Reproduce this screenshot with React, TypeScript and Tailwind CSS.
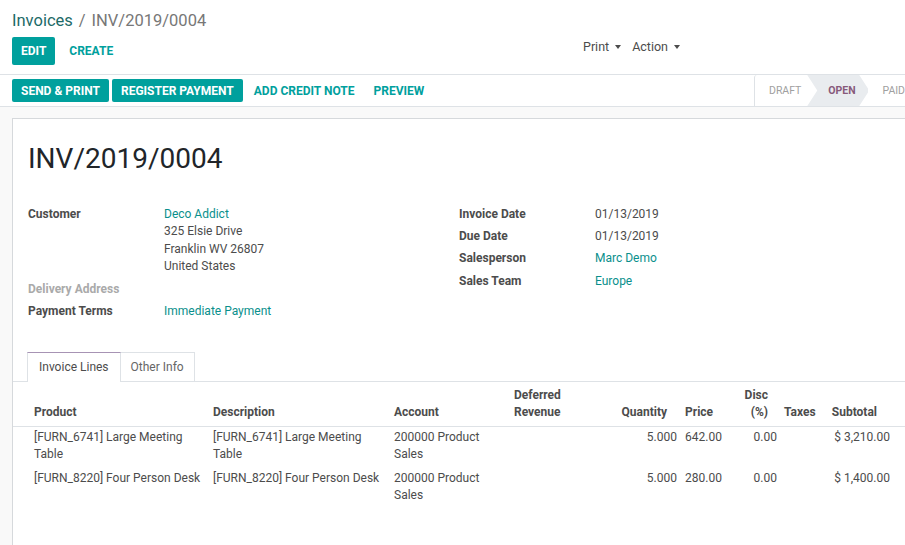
const Caret = () => (
  <span className="ml-[6px] inline-block h-0 w-0 border-x-[3.5px] border-t-[4px] border-x-transparent border-t-[#4c4c4c] align-middle" />
);

const Field = ({ label, children, muted }: { label: string; children?: React.ReactNode; muted?: boolean }) => (
  <div className="flex py-[2px] leading-[18px]">
    <div className={`w-[136px] shrink-0 font-bold ${muted ? "text-[#aaaaaa]" : "text-[#4c4c4c]"}`}>{label}</div>
    <div className="text-[#4c4c4c]">{children}</div>
  </div>
);

const cols = "grid grid-cols-[194px_181px_120px_102px_73px_57px_43px_43px_70px]";

const lines = [
  {
    product: ["[FURN_6741] Large Meeting", "Table"],
    desc: ["[FURN_6741] Large Meeting", "Table"],
    qty: "5.000",
    price: "642.00",
    subtotal: "$ 3,210.00",
  },
  {
    product: ["[FURN_8220] Four Person Desk"],
    desc: ["[FURN_8220] Four Person Desk"],
    qty: "5.000",
    price: "280.00",
    subtotal: "$ 1,400.00",
  },
];

export default function App() {
  return (
    <div className="h-[545px] w-[905px] overflow-hidden bg-white text-[12px] text-[#4c4c4c] [font-family:Roboto,'Noto_Sans',sans-serif]">
      {/* control panel */}
      <div className="h-[75px] border-b border-[#dee2e6] px-3">
        <div className="h-[37px] pt-[9px] text-[16.5px] leading-[24px]">
          <span className="text-[#1d6a67]">Invoices</span>
          <span className="px-[6px] text-[#777777]">/</span>
          <span className="text-[#777777]">INV/2019/0004</span>
        </div>
        <div className="flex h-[28px] items-center">
          <div className="flex w-[571px] items-center">
            <button className="h-[28px] rounded-[2px] bg-[#00A09D] px-[9px] text-[12px] font-bold text-white">EDIT</button>
            <button className="ml-[4px] h-[28px] px-[10px] text-[12px] font-bold text-[#00A09D]">CREATE</button>
          </div>
          <div className="flex items-center self-start pt-[1px] text-[12.5px] leading-[18px] text-[#4c4c4c]">
            <span>Print</span>
            <Caret />
            <span className="ml-[11px]">Action</span>
            <Caret />
          </div>
        </div>
      </div>

      {/* status bar */}
      <div className="flex h-[32px] items-center border-b border-[#dee2e6] pl-3">
        <div className="flex items-center gap-[3px]">
          <button className="h-[23px] rounded-[2px] bg-[#00A09D] px-[9px] text-[12px] font-bold text-white">SEND &amp; PRINT</button>
          <button className="h-[23px] rounded-[2px] bg-[#00A09D] px-[9px] text-[12px] font-bold text-white">REGISTER PAYMENT</button>
          <button className="h-[23px] px-[8px] text-[12px] font-bold text-[#00A09D]">ADD CREDIT NOTE</button>
          <button className="h-[23px] px-[8px] text-[12px] font-bold text-[#00A09D]">PREVIEW</button>
        </div>
        <div className="ml-auto flex h-full w-[151px] items-stretch rounded-tl-[3px] border-l border-[#dee2e6] text-[10.5px]">
          <div className="flex w-[53px] items-center pl-[14px] text-[#a0a0a0]">DRAFT</div>
          <div className="flex w-[62px] items-center bg-[#e9ecef] pl-[21px] font-bold text-[#875A7B] [clip-path:polygon(0_0,52px_0,62px_50%,52px_100%,0_100%,10px_50%)]">
            OPEN
          </div>
          <div className="flex items-center pl-[14px] text-[#a0a0a0]">PAID</div>
        </div>
      </div>

      {/* form */}
      <div className="h-full bg-[#f9f9f9] pl-3 pt-[11px]">
        <div className="min-h-[500px] w-[905px] border border-[#d6d9dc] bg-white pl-[15px] pt-[23px]">
          <h1 className="text-[28px] leading-[34px] text-[#212529]">INV/2019/0004</h1>

          <div className="mt-[27px] flex">
            <div className="w-[431px]">
              <Field label="Customer">
                <div className="text-[#0a8f8c]">Deco Addict</div>
                <div className="leading-[17.5px]">325 Elsie Drive</div>
                <div className="leading-[17.5px]">Franklin WV 26807</div>
                <div className="leading-[17.5px]">United States</div>
              </Field>
              <Field label="Delivery Address" muted />
              <Field label="Payment Terms">
                <span className="text-[#0a8f8c]">Immediate Payment</span>
              </Field>
            </div>
            <div>
              <Field label="Invoice Date">01/13/2019</Field>
              <Field label="Due Date">01/13/2019</Field>
              <Field label="Salesperson">
                <span className="text-[#0a8f8c]">Marc Demo</span>
              </Field>
              <div className="pt-[1px]">
                <Field label="Sales Team">
                  <span className="text-[#0a8f8c]">Europe</span>
                </Field>
              </div>
            </div>
          </div>

          {/* notebook */}
          <div className="-ml-[15px] mt-[30.5px]">
            <div className="flex border-b border-[#dee2e6] pl-[14px]">
              <div className="-mb-px border-x border-t border-x-[#dee2e6] border-t-[#a793b4] bg-white px-[11px] py-[5px] leading-[18px] text-[#4c4c4c]">
                Invoice Lines
              </div>
              <div className="border-r border-t border-[#dee2e6] px-[10px] py-[5px] leading-[18px] text-[#666666]">
                Other Info
              </div>
            </div>

            <div className={`${cols} items-end border-b border-[#dee2e6] pb-[5px] pt-[5px] font-bold leading-[17px]`}>
              <div className="pl-[21px]">Product</div>
              <div className="pl-[6px]">Description</div>
              <div className="pl-[6px]">Account</div>
              <div className="pl-[6px]">
                Deferred
                <br />
                Revenue
              </div>
              <div className="pr-[16px] text-right">Quantity</div>
              <div className="pl-[2px]">Price</div>
              <div className="pr-[15px] text-right">
                Disc
                <br />
                (%)
              </div>
              <div className="pl-[1px]">Taxes</div>
              <div className="pr-[19px] text-right">Subtotal</div>
            </div>

            {lines.map((l, i) => (
              <div key={i} className={`${cols} pb-[5px] pt-[2px] leading-[17px]`}>
                <div className="pl-[21px]">
                  {l.product.map((p) => (
                    <div key={p}>{p}</div>
                  ))}
                </div>
                <div className="pl-[6px]">
                  {l.desc.map((p) => (
                    <div key={p}>{p}</div>
                  ))}
                </div>
                <div className="pl-[6px]">
                  <div>200000 Product</div>
                  <div>Sales</div>
                </div>
                <div />
                <div className="pr-[6px] text-right">{l.qty}</div>
                <div className="pl-[2px]">{l.price}</div>
                <div className="pr-[6px] text-right">0.00</div>
                <div />
                <div className="pr-[6px] text-right">{l.subtotal}</div>
              </div>
            ))}
          </div>
        </div>
      </div>
    </div>
  );
}
